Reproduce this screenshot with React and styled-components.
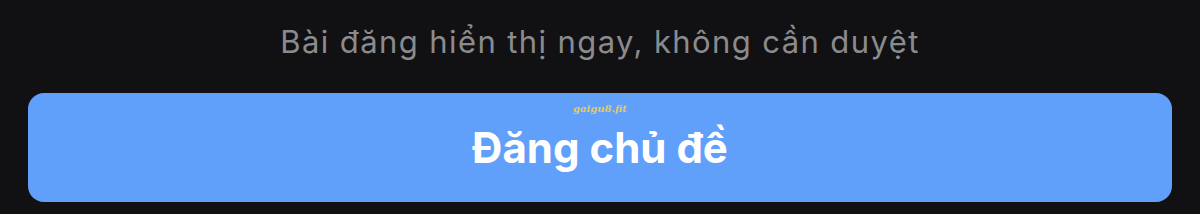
import React from "react";
import styled, { createGlobalStyle } from "styled-components";

const GlobalStyle = createGlobalStyle`
  html, body {
    margin: 0;
    padding: 0;
    background: #111113;
  }
`;

const Page = styled.div`
  width: 1200px;
  height: 214px;
  box-sizing: border-box;
  padding: 0 28px;
  display: flex;
  flex-direction: column;
  align-items: stretch;
  background: #111113;
`;

const Hint = styled.p`
  margin: 0;
  height: 93px;
  padding-top: 21px;
  box-sizing: border-box;
  text-align: center;
  font-family: Inter, "Noto Sans", sans-serif;
  font-size: 31px;
  letter-spacing: 1.4px;
  line-height: 42px;
  color: #8b8b8e;
`;

const SubmitButton = styled.button`
  position: relative;
  height: 109px;
  border: none;
  border-radius: 16px;
  background: #61a0fa;
  color: #ffffff;
  font-family: Inter, "Noto Sans", sans-serif;
  font-weight: 700;
  font-size: 42px;
  display: flex;
  align-items: center;
  justify-content: center;
  padding: 0;
  cursor: pointer;
`;

const Watermark = styled.span`
  position: absolute;
  top: 10px;
  left: 50%;
  transform: translateX(-50%);
  font-family: "DejaVu Serif", serif;
  font-style: italic;
  font-weight: 700;
  font-size: 10px;
  letter-spacing: 0;
  color: #e8c85a;
`;

export default function App() {
  return (
    <>
      <GlobalStyle />
      <Page>
        <Hint>Bài đăng hiển thị ngay, không cần duyệt</Hint>
        <SubmitButton>
          <Watermark>gaigu8.fit</Watermark>
          Đăng chủ đề
        </SubmitButton>
      </Page>
    </>
  );
}
